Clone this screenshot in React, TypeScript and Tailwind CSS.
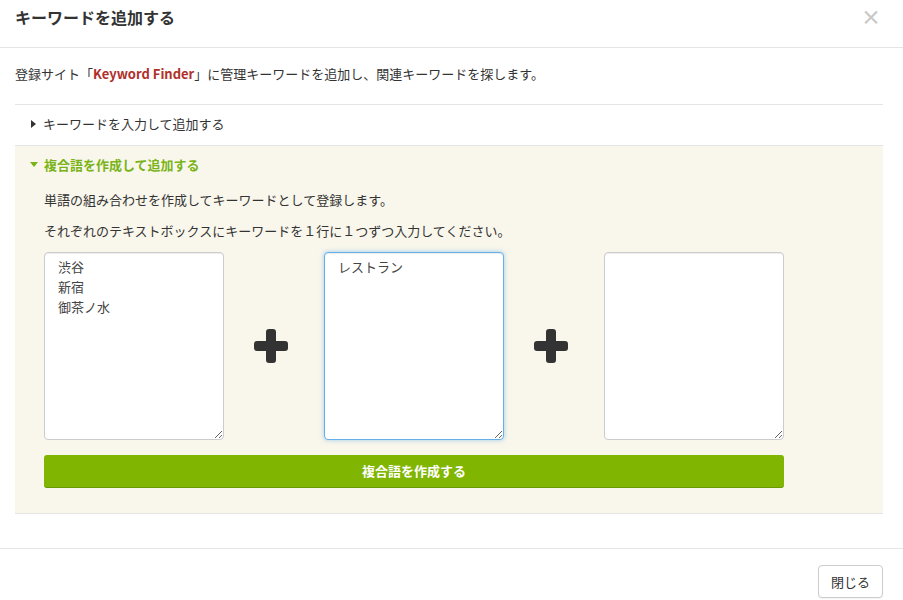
import { useState } from "react";

const PlusMark = () => (
  <svg width="36" height="36" viewBox="0 0 36 36" className="text-[#333]">
    <rect x="13" y="1" width="10" height="34" rx="3" fill="currentColor" />
    <rect x="1" y="13" width="34" height="10" rx="3" fill="currentColor" />
  </svg>
);

const Caret = ({ open }: { open: boolean }) =>
  open ? (
    <svg width="8" height="6" viewBox="0 0 8 6" className="text-[#7ab317]">
      <path d="M0 0 L8 0 L4 5 Z" fill="currentColor" />
    </svg>
  ) : (
    <svg width="6" height="8" viewBox="0 0 6 8" className="text-[#333]">
      <path d="M0 0 L5 4 L0 8 Z" fill="currentColor" />
    </svg>
  );

export default function App() {
  const [words, setWords] = useState(["渋谷\n新宿\n御茶ノ水", "レストラン", ""]);

  const update = (i: number, v: string) =>
    setWords((w) => w.map((x, j) => (j === i ? v : x)));

  return (
    <div
      className="w-[903px] h-[600px] bg-white text-[13px] leading-[20px] text-[#333] overflow-hidden"
      style={{ fontFamily: '"Noto Sans CJK JP", "Noto Sans", sans-serif' }}
    >
      {/* header */}
      <div className="flex items-start justify-between px-[15px] pt-[5px] pb-[18px] border-b border-[#e5e5e5]">
        <h1 className="text-[16px] leading-[24px] font-bold text-[#333]">キーワードを追加する</h1>
        <button className="text-[20px] leading-[24px] font-bold text-[#c8c8c8] mr-[7px]">×</button>
      </div>

      {/* body */}
      <div className="pl-[15px] pr-[20px] pt-[16px] pb-[34px] border-b border-[#e5e5e5]">
        <p className="mb-[20px]">
          登録サイト「<span className="text-[#b0302b] font-semibold">Keyword Finder</span>」に管理キーワードを追加し、関連キーワードを探します。
        </p>

        <div className="border-t border-b border-[#e5e5e5]">
          <div className="flex items-center gap-[6px] h-[41px] pl-[16px] pb-[2px] border-b border-[#e5e5e5]">
            <Caret open={false} />
            <span>キーワードを入力して追加する</span>
          </div>

          <div className="bg-[#f9f7ec] pt-[9px] pb-[25px]">
            <div className="flex items-center gap-[6px] pl-[15px] font-bold text-[#7ab317]">
              <Caret open />
              <span>複合語を作成して追加する</span>
            </div>
            <div className="pl-[29px] w-[769px]">
              <p className="mt-[15px]">単語の組み合わせを作成してキーワードとして登録します。</p>
              <p className="mt-[11px]">それぞれのテキストボックスにキーワードを１行に１つずつ入力してください。</p>

              <div className="flex items-center mt-[11px]">
                {words.map((w, i) => (
                  <div key={i} className="flex items-center">
                    {i > 0 && (
                      <div className="w-[100px] flex justify-center pr-[6px]">
                        <PlusMark />
                      </div>
                    )}
                    <textarea
                      value={w}
                      onChange={(e) => update(i, e.target.value)}
                      className={
                        i === 1
                          ? "w-[180px] h-[188px] bg-white rounded-[4px] border border-[#66afe9] px-[13px] py-[4px] text-[13px] leading-[20px] text-[#444] outline-none shadow-[inset_0_1px_1px_rgba(0,0,0,0.075),0_0_5px_rgba(102,175,233,0.6)]"
                          : "w-[180px] h-[188px] bg-white rounded-[4px] border border-[#ccc] px-[13px] py-[4px] text-[13px] leading-[20px] text-[#444] outline-none shadow-[inset_0_1px_1px_rgba(0,0,0,0.075)]"
                      }
                      style={{ fontFamily: '"Noto Sans CJK JP", sans-serif' }}
                    />
                  </div>
                ))}
              </div>

              <button className="mt-[15px] w-[740px] h-[33px] rounded-[3px] bg-[#80b602] border-b border-[#6a9a00] text-white font-bold">
                複合語を作成する
              </button>
            </div>
          </div>
        </div>
      </div>

      {/* footer */}
      <div className="flex justify-end px-[20px] pt-[16px]">
        <button className="h-[33px] px-[12px] rounded-[4px] border border-[#ccc] bg-white text-[#333] shadow-[0_1px_1px_rgba(0,0,0,0.05)]">
          閉じる
        </button>
      </div>
    </div>
  );
}
